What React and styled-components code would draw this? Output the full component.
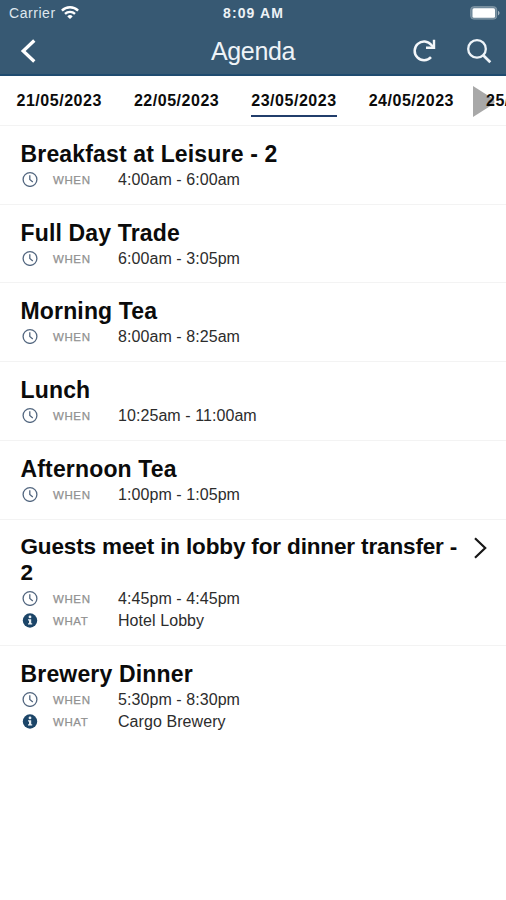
import React from "react";
import styled, { createGlobalStyle } from "styled-components";

const GlobalStyle = createGlobalStyle`
  * { box-sizing: border-box; }
  body {
    margin: 0;
    background: #fff;
    font-family: "Liberation Sans", Arial, sans-serif;
    overflow: hidden;
  }
`;

const Screen = styled.main`
  width: 506px;
  height: 900px;
  display: flex;
  flex-direction: column;
  overflow: hidden;
  background: #fff;
  color: #0b0b0b;
`;

const TopArea = styled.header`
  height: 76px;
  flex: none;
  background: #375973;
  border-bottom: 2px solid #1f4b6f;
  color: #fff;
`;

const StatusBar = styled.div`
  height: 26px;
  display: grid;
  grid-template-columns: 1fr auto 1fr;
  align-items: center;
  padding: 0 6px 0 9px;
`;

const Carrier = styled.span`
  display: flex;
  align-items: center;
  gap: 5px;
  font-size: 14px;
  letter-spacing: 0.55px;
  color: #dfe7ee;
`;

const Time = styled.span`
  margin-right: 2px;
  font-size: 14px;
  font-weight: 700;
  letter-spacing: 1.1px;
  color: #edf2f6;
`;

const BatterySlot = styled.span`
  display: flex;
  justify-content: flex-end;
`;

const NavBar = styled.div`
  height: 49px;
  display: grid;
  grid-template-columns: 1fr auto 1fr;
  align-items: center;
  padding: 0 14px 0 20px;
`;

const PageTitle = styled.h1`
  margin: 0 6px 0 0;
  font-size: 25px;
  font-weight: 400;
  line-height: 28px;
  letter-spacing: -0.4px;
  color: #eef3f7;
`;

const Actions = styled.div`
  display: flex;
  justify-content: flex-end;
  gap: 30px;
`;

const IconButton = styled.button`
  display: flex;
  padding: 0;
  border: 0;
  background: none;
  color: inherit;
  justify-self: start;
`;

const DateTabs = styled.nav`
  position: relative;
  height: 50px;
  flex: none;
  display: flex;
  gap: 31.2px;
  padding: 15px 0 0 16.5px;
  border-bottom: 1px solid #f3f3f3;
  overflow: hidden;
`;

const DateTab = styled.span`
  position: relative;
  z-index: 1;
  flex: none;
  width: 86.2px;
  height: 26px;
  line-height: 20px;
  font-size: 16px;
  font-weight: 700;
  letter-spacing: 0.53px;
  white-space: nowrap;
  border-bottom: 2px solid ${(p) => (p.$active ? "#213d6b" : "transparent")};
`;

const ScrollHint = styled.svg`
  position: absolute;
  left: 473px;
  top: 10px;
`;

const Item = styled.article`
  display: flex;
  flex: none;
  height: ${(p) => p.$height}px;
  padding: ${(p) => (p.$compact ? 14 : 15)}px 18px 0 20.5px;
  border-bottom: ${(p) => (p.$last ? "0" : "1px solid #f3f3f3")};
`;

const ItemBody = styled.div`
  flex: 1;
`;

const ItemTitle = styled.h2`
  margin: 0 0 1px;
  font-size: ${(p) => (p.$compact ? 22.5 : 23)}px;
  font-weight: 700;
  line-height: 26px;
  letter-spacing: ${(p) => (p.$compact ? -0.14 : 0.16)}px;
`;

const Detail = styled.div`
  height: 22px;
  display: grid;
  grid-template-columns: 31px 65px 1fr;
  align-items: center;
  padding-left: 1.5px;
  white-space: nowrap;
`;

const Label = styled.span`
  padding-top: 1px;
  font-size: 11.5px;
  letter-spacing: 0.6px;
  color: #919191;
  -webkit-text-stroke: 0.25px #919191;
`;

const Value = styled.span`
  padding-top: 1px;
  font-size: 16px;
  letter-spacing: 0.07px;
  color: #2c2c2c;
`;

const Wifi = () => (
  <svg width="18" height="14" viewBox="0 0 18 14" fill="none" stroke="#fff" strokeWidth="2.4">
    <path d="M.9 4.6a11.6 11.6 0 0 1 16.2 0M4 7.9a7.2 7.2 0 0 1 10 0" />
    <path d="M9 13.1 6.3 10.4a3.9 3.9 0 0 1 5.4 0Z" fill="#fff" stroke="none" />
  </svg>
);

const Battery = () => (
  <svg width="30" height="14" viewBox="0 0 30 14">
    <rect x=".7" y=".7" width="26" height="12.4" rx="3" fill="#6d8799" stroke="#8499a8" />
    <rect x="2.5" y="2.2" width="22.5" height="9.5" rx="1.5" fill="#fff" />
    <path d="M28 4.7c2 .8 2 3.8 0 4.5Z" fill="#a5b5c0" />
  </svg>
);

const Back = () => (
  <svg width="17" height="26" viewBox="0 0 17 26" fill="none" stroke="#fff" strokeWidth="3.3">
    <path d="M14.3 2.5 3.2 13l11.1 10.5" />
  </svg>
);

const Refresh = () => (
  <svg width="24" height="24" viewBox="0 0 24 24" fill="none" stroke="#f4f7fa" strokeWidth="2.5">
    <path d="M19 19.2A9.4 9.4 0 1 1 19.4 7L21.5 9.2" />
    <path d="M22 1.7v8h-8" strokeWidth="2.4" />
  </svg>
);

const Search = () => (
  <svg width="26" height="26" viewBox="0 0 26 26" fill="none" stroke="#eef4f9" strokeWidth="2.3">
    <circle cx="11" cy="10.9" r="8.8" />
    <path d="m17.2 17.2 7.1 7.1" strokeWidth="2.7" />
  </svg>
);

const Clock = () => (
  <svg width="16" height="16" viewBox="0 0 16 16" fill="none" stroke="#52667f" strokeWidth="1.3">
    <circle cx="8" cy="8.5" r="6.9" />
    <path d="M7.8 4.3v4.2l3 2.4" />
  </svg>
);

const Info = () => (
  <svg width="16" height="16" viewBox="0 0 16 16">
    <circle cx="8" cy="8.5" r="7.2" fill="#1c4568" />
    <circle cx="8" cy="4.9" r="1.4" fill="#e9eff4" />
    <path d="M6 7.2h3.2v4.1h1v1.2H6v-1.2h1V8.4H6Z" fill="#e9eff4" />
  </svg>
);

const Forward = () => (
  <svg width="16" height="28" viewBox="0 0 16 28" fill="none" stroke="#171717" strokeWidth="2.2">
    <path d="M3 4.2 13.2 14 3 23.8" />
  </svg>
);

const dates = ["21/05/2023", "22/05/2023", "23/05/2023", "24/05/2023", "25/05/2023"];

const items = [
  { title: "Breakfast at Leisure - 2", when: "4:00am - 6:00am", height: 79 },
  { title: "Full Day Trade", when: "6:00am - 3:05pm", height: 78 },
  { title: "Morning Tea", when: "8:00am - 8:25am", height: 79 },
  { title: "Lunch", when: "10:25am - 11:00am", height: 79 },
  { title: "Afternoon Tea", when: "1:00pm - 1:05pm", height: 79 },
  {
    title: "Guests meet in lobby for dinner transfer - 2",
    when: "4:45pm - 4:45pm",
    what: "Hotel Lobby",
    height: 126,
    link: true,
  },
  { title: "Brewery Dinner", when: "5:30pm - 8:30pm", what: "Cargo Brewery", height: 126 },
];

export default function App() {
  return (
    <Screen>
      <GlobalStyle />
      <TopArea>
        <StatusBar>
          <Carrier>
            Carrier <Wifi />
          </Carrier>
          <Time>8:09 AM</Time>
          <BatterySlot>
            <Battery />
          </BatterySlot>
        </StatusBar>
        <NavBar>
          <IconButton aria-label="Back">
            <Back />
          </IconButton>
          <PageTitle>Agenda</PageTitle>
          <Actions>
            <IconButton aria-label="Refresh">
              <Refresh />
            </IconButton>
            <IconButton aria-label="Search">
              <Search />
            </IconButton>
          </Actions>
        </NavBar>
      </TopArea>
      <DateTabs>
        <ScrollHint width="22" height="32" viewBox="0 0 22 32">
          <path d="M0 0 20.5 13q2 3 0 5L0 31Z" fill="#a8a8a8" />
        </ScrollHint>
        {dates.map((date) => (
          <DateTab key={date} $active={date === "23/05/2023"}>
            {date}
          </DateTab>
        ))}
      </DateTabs>
      {items.map((item, index) => (
        <Item
          key={item.title}
          $height={item.height}
          $compact={item.link}
          $last={index === items.length - 1}
        >
          <ItemBody>
            <ItemTitle $compact={item.link}>{item.title}</ItemTitle>
            <Detail>
              <Clock />
              <Label>WHEN</Label>
              <Value>{item.when}</Value>
            </Detail>
            {item.what && (
              <Detail>
                <Info />
                <Label>WHAT</Label>
                <Value>{item.what}</Value>
              </Detail>
            )}
          </ItemBody>
          {item.link && <Forward />}
        </Item>
      ))}
    </Screen>
  );
}
